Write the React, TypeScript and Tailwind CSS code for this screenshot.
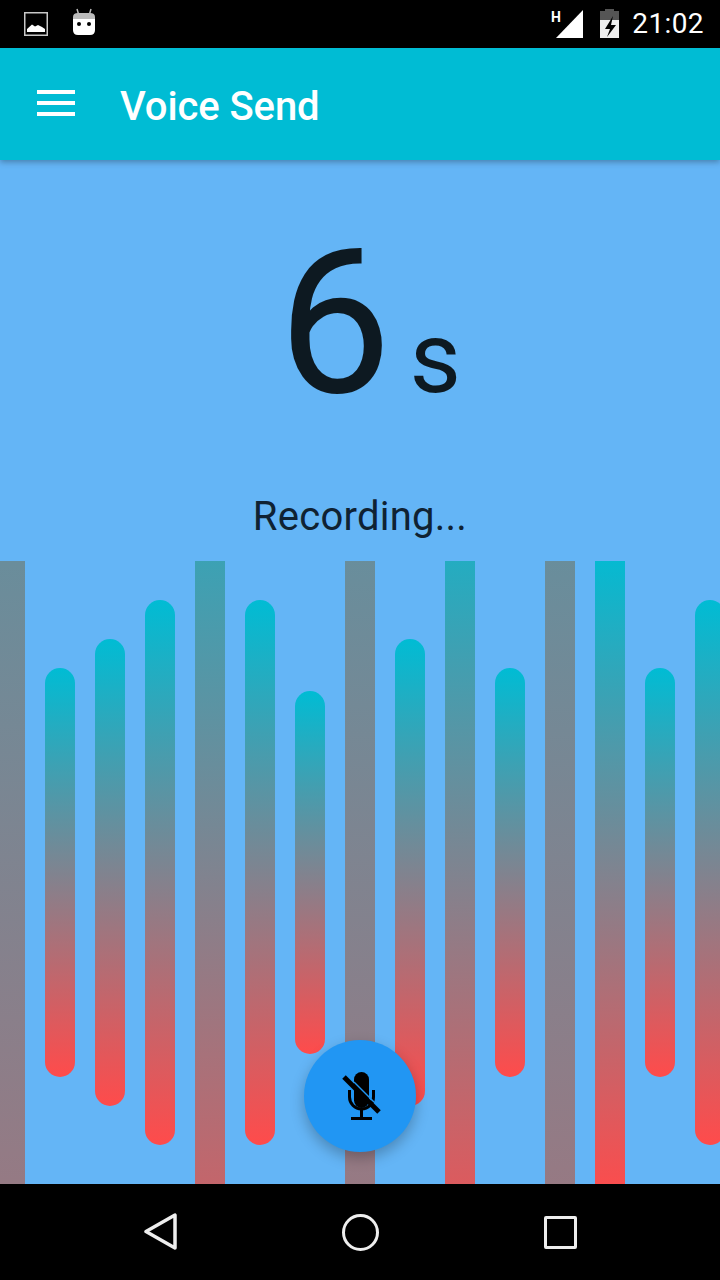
import React from "react";

const bars = [3661, 409, 467, 545, 1175, 545, 363, 3461, 467, 865, 409, 3501, 651, 409, 545];

function StatusBar() {
  return (
    <div className="h-12 bg-black flex items-center justify-between pl-6 pr-4 shrink-0">
      <div className="flex items-center gap-6">
        <svg width="24" height="24" viewBox="0 0 24 24">
          <rect x="0.750" y="0.750" width="22.500" height="22.500" fill="none" stroke="#c8c8c8" strokeWidth="1.500" />
          <path d="M3 20v-3l5-4.500 3 2 3-1.500 4 2 3 2v3z" fill="#fff" />
        </svg>
        <svg width="24" height="30" viewBox="0 0 24 30" className="-mt-1">
          <path d="M5 2l1.500 5M19 2l-1.500 5" stroke="#bbb" strokeWidth="1.500" />
          <path d="M1 10q0-4 5-4h12q5 0 5 4v2H1z" fill="#bbb" />
          <path d="M1 12h22v11q0 5-5 5H6q-5 0-5-5z" fill="#fff" />
          <circle cx="7" cy="17" r="2" fill="#000" />
          <circle cx="17" cy="17" r="2" fill="#000" />
        </svg>
      </div>
      <div className="flex items-center">
        <svg width="34" height="30" viewBox="0 0 34 30" className="mr-4">
          <path d="M33 1v28H6z" fill="#fff" />
          <text x="1" y="13" fill="#fff" fontSize="14" fontWeight="700" fontFamily="Roboto, sans-serif">H</text>
        </svg>
        <svg width="20" height="30" viewBox="0 0 20 30" className="mr-3">
          <path d="M5 0h9v2h5v9H0V2h5z" fill="#555" />
          <path d="M0 11h19v18H0z" fill="#eee" />
          <path d="M13 7L5 20h5l-3 8 9-12h-5z" fill="#000" />
        </svg>
        <span className="text-[28px] leading-none text-white tracking-[0.4px]">21:02</span>
      </div>
    </div>
  );
}

export default function App() {
  return (
    <div className="w-[720px] h-[1280px] relative flex flex-col overflow-hidden bg-[#64b5f6] font-['Roboto',sans-serif]">
      <StatusBar />

      {/* App bar */}
      <header className="h-28 bg-[#00bcd4] flex items-center pl-[37px] shrink-0 relative z-10 shadow-[0_2px_6px_rgba(0,0,0,0.3)]">
        <div className="w-[38px] flex flex-col gap-[7px] -mt-[2px]">
          <div className="h-1 bg-white" />
          <div className="h-1 bg-white" />
          <div className="h-1 bg-white" />
        </div>
        <h1 className="ml-[45px] mt-[5px] text-[40px] font-medium text-white leading-none tracking-[-0.1px]">Voice Send</h1>
      </header>

      {/* Timer */}
      <div className="h-[401px] flex flex-col items-center shrink-0">
        <div className="flex items-baseline gap-[18px] pl-[19px] mt-[62px] h-[230px] text-[#0d1921]">
          <span className="text-[202px] font-normal leading-none">6</span>
          <span className="text-[100px] font-normal leading-none">s</span>
        </div>
        <p className="mt-[45px] text-[40px] leading-none text-[#0f2233] tracking-[0.25px]">Recording...</p>
      </div>

      {/* Bars */}
      <div className="h-[623px] flex items-center gap-5 -ml-[5px] overflow-hidden shrink-0">
        {bars.map((h, i) => (
          <div
            key={i}
            className="w-[30px] shrink-0 rounded-full bg-linear-to-b/srgb from-[#00bcd4] to-[#ff4b4b]"
            style={{ height: h }}
          />
        ))}
      </div>

      {/* Mic button */}
      <button className="absolute left-[304px] top-[1040px] w-28 h-28 rounded-full bg-[#2196f3] flex items-center justify-center shadow-[0_6px_14px_rgba(0,0,0,0.25)]">
        <svg width="48" height="56" viewBox="0 0 48 56">
          <rect x="18" y="4" width="15" height="36" rx="7.500" fill="#000" />
          <path d="M13.500 22v7a12 12 0 0 0 24 0v-7" fill="none" stroke="#000" strokeWidth="3" />
          <path d="M25.500 40v10M15 50.500h21" stroke="#000" strokeWidth="3" fill="none" />
          <path d="M8 9l35 35" stroke="#000" strokeWidth="5" />
          <path d="M18 14l20 20" stroke="#2196f3" strokeWidth="1.500" />
        </svg>
      </button>

      {/* Nav bar */}
      <nav className="h-24 bg-black relative flex items-center justify-between pl-[144px] pr-[143px] shrink-0">
        <svg width="34" height="40" viewBox="0 0 34 40">
          <path d="M31 3v33L2 19.500z" fill="none" stroke="#eee" strokeWidth="3.500" strokeLinejoin="round" />
        </svg>
        <div className="w-[37px] h-[37px] mr-[2px] rounded-full border-[3.5px] border-[#eee]" />
        <div className="w-[33px] h-[33px] rounded-[2px] border-[3.5px] border-[#eee]" />
      </nav>
    </div>
  );
}
